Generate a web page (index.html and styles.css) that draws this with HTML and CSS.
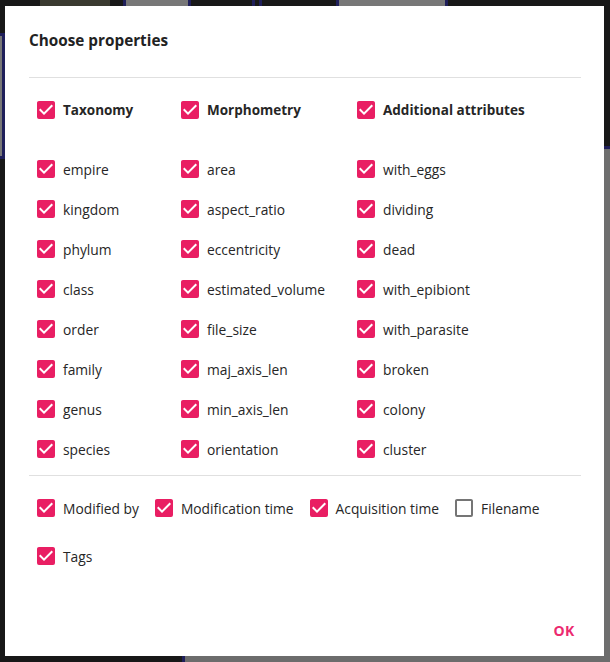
FILE: index.html
```html
<!DOCTYPE html>
<html>
<head>
<meta charset="utf-8">
<link rel="stylesheet" href="styles.css">
</head>
<body>
<div class="backdrop">
  <div class="tile t1"></div>
  <div class="tile t2"></div>
  <div class="tile t3"></div>
  <div class="tile t4"></div>
  <div class="tile t5"></div>
  <div class="tile t6"></div>
  <div class="tile t7"></div>
</div>
<div class="dialog">
  <div class="title">Choose properties</div>
  <div class="divider"></div>
  <div class="content">
    <div class="grid header">
      <label class="cb bold"><svg viewBox="3 3 18 18"><path class="on" d="M10,17L5,12L6.41,10.58L10,14.17L17.59,6.58L19,8M19,3H5C3.89,3 3,3.89 3,5V19A2,2 0 0,0 5,21H19A2,2 0 0,0 21,19V5C21,3.89 20.1,3 19,3Z"/></svg><span>Taxonomy</span></label>
      <label class="cb bold"><svg viewBox="3 3 18 18"><path class="on" d="M10,17L5,12L6.41,10.58L10,14.17L17.59,6.58L19,8M19,3H5C3.89,3 3,3.89 3,5V19A2,2 0 0,0 5,21H19A2,2 0 0,0 21,19V5C21,3.89 20.1,3 19,3Z"/></svg><span>Morphometry</span></label>
      <label class="cb bold"><svg viewBox="3 3 18 18"><path class="on" d="M10,17L5,12L6.41,10.58L10,14.17L17.59,6.58L19,8M19,3H5C3.89,3 3,3.89 3,5V19A2,2 0 0,0 5,21H19A2,2 0 0,0 21,19V5C21,3.89 20.1,3 19,3Z"/></svg><span>Additional attributes</span></label>
    </div>
    <div class="grid props" id="props"></div>
  </div>
  <div class="divider"></div>
  <div class="extra">
    <div class="extra-row" id="row1"></div>
    <div class="extra-row" id="row2"></div>
  </div>
  <div class="actions">
    <button class="ok">OK</button>
  </div>
</div>
<script>
const ON = '<svg viewBox="3 3 18 18"><path class="on" d="M10,17L5,12L6.41,10.58L10,14.17L17.59,6.58L19,8M19,3H5C3.89,3 3,3.89 3,5V19A2,2 0 0,0 5,21H19A2,2 0 0,0 21,19V5C21,3.89 20.1,3 19,3Z"/></svg>';
const OFF = '<svg viewBox="3 3 18 18"><path class="off" d="M19,3H5C3.89,3 3,3.89 3,5V19A2,2 0 0,0 5,21H19A2,2 0 0,0 21,19V5C21,3.89 20.1,3 19,3M19,5V19H5V5H19Z"/></svg>';
const cols = [
  ["empire","kingdom","phylum","class","order","family","genus","species"],
  ["area","aspect_ratio","eccentricity","estimated_volume","file_size","maj_axis_len","min_axis_len","orientation"],
  ["with_eggs","dividing","dead","with_epibiont","with_parasite","broken","colony","cluster"]
];
let h = "";
for (let r = 0; r < 8; r++) for (let c = 0; c < 3; c++)
  h += '<label class="cb">' + ON + '<span>' + cols[c][r] + '</span></label>';
document.getElementById("props").innerHTML = h;
const ex = [["Modified by",1],["Modification time",1],["Acquisition time",1],["Filename",0]];
document.getElementById("row1").innerHTML = ex.map(e => '<label class="cb">' + (e[1]?ON:OFF) + '<span>' + e[0] + '</span></label>').join("");
document.getElementById("row2").innerHTML = '<label class="cb">' + ON + '<span>Tags</span></label>';
</script>
</body>
</html>
```
FILE: styles.css
```css
html, body { margin: 0; padding: 0; }
body {
  width: 610px; height: 662px; overflow: hidden;
  background: #181818;
  font-family: "Open Sans", "Noto Sans", sans-serif;
  position: relative;
}
.backdrop { position: absolute; inset: 0; }
.tile { position: absolute; background: #777; border: 3px solid #1f1f5a; border-top: none; border-bottom: none; }
.t1 { left: 123px; top: 0; width: 62px; height: 10px; }
.t2 { left: 336px; top: 0; width: 106px; height: 10px; }
.t3 { left: 0; top: 33px; width: 2px; height: 120px; border-left: none; border-top: 3px solid #1f1f5a; border-bottom: 3px solid #1f1f5a; }
.t4 { left: 596px; top: 146px; width: 14px; height: 516px; border: none; border-top: 3px solid #1f1f5a; background: #6e6e6e; }
.t5 { left: 182px; top: 650px; width: 428px; height: 12px; border-right: none; background: #6c6c6c; }
.t6 { left: 252px; top: 0; width: 4px; height: 10px; background: #181818; }
.t7 { left: 40px; top: 0; width: 70px; height: 6px; background: #3a3a30; border: none; }

.dialog {
  position: absolute; left: 5px; top: 6px; width: 599px; height: 650px;
  background: #fff; display: flex; flex-direction: column;
  color: rgba(0,0,0,0.87);
}
.title {
  padding: 20px 24px 0; font-size: 15.3px; font-weight: 700; line-height: 28px;
  color: #222;
}
.divider { height: 1px; background: #e0e0e0; margin: 0 23px 0 24px; }
.title + .divider { margin-top: 23px; }
.content { padding: 20px 24px 14px 32px; }
.grid { display: grid; grid-template-columns: 144px 176px 1fr; }
.header { margin-bottom: 35px; }
.props { row-gap: 16px; }
.cb { display: flex; align-items: center; gap: 8px; height: 24px; font-size: 13.8px; white-space: nowrap; color: #262626; }
.cb svg { width: 18px; height: 18px; flex: none; }
.cb.bold { font-weight: 700; font-size: 13.5px; }
.on { fill: #e91e63; }
.off { fill: #757575; }
.extra { padding: 20px 24px 0 32px; display: flex; flex-direction: column; gap: 24px; }
.extra-row { display: flex; gap: 16px; }
.actions { margin-top: auto; padding: 8px; display: flex; justify-content: flex-end; }
.ok {
  min-width: 64px; height: 36px; border: none; background: none;
  color: #ec2a6f; font-family: inherit; font-weight: 700; font-size: 14px;
  letter-spacing: 0.3px; padding: 0 16px;
}
```
